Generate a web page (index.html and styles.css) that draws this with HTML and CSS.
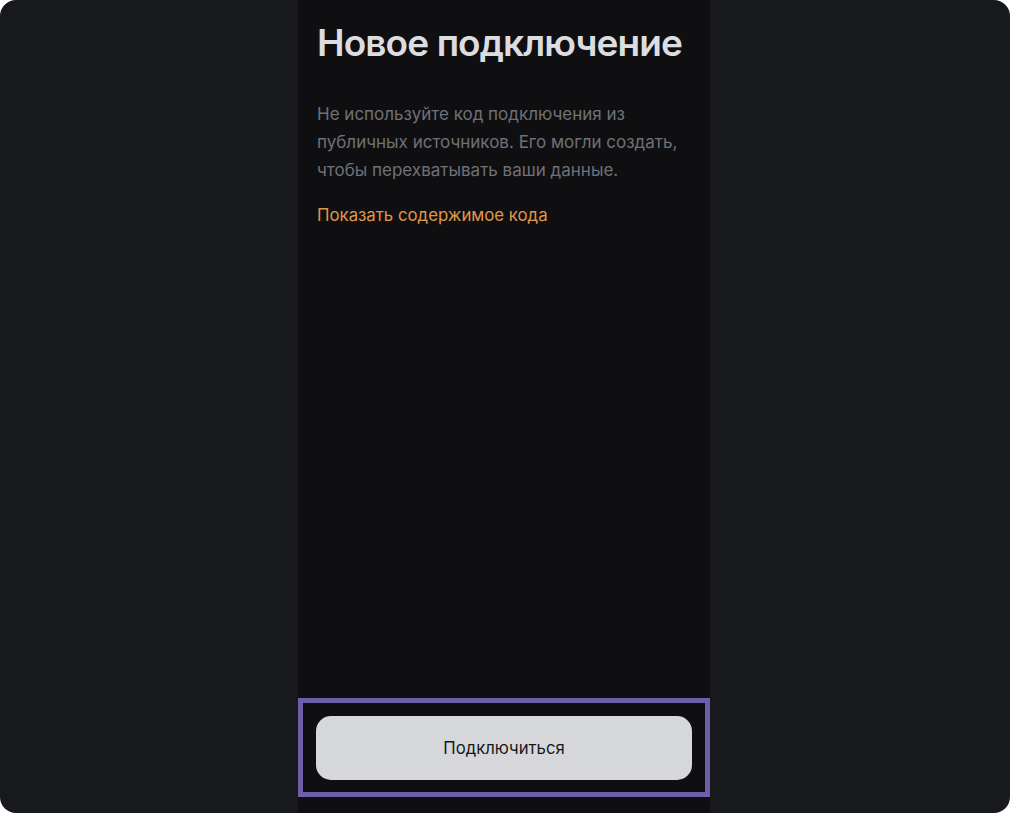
FILE: index.html
```html
<!DOCTYPE html>
<html lang="ru">
<head>
<meta charset="utf-8">
<link rel="stylesheet" href="styles.css">
</head>
<body>
<div class="frame">
  <main class="panel">
    <section class="content">
      <h1 class="title">Новое подключение</h1>
      <p class="warning">Не используйте код подключения из публичных источников. Его могли создать, чтобы перехватывать ваши данные.</p>
      <a class="link" href="#">Показать содержимое кода</a>
    </section>
    <footer class="footer">
      <button class="connect" type="button">Подключиться</button>
    </footer>
  </main>
</div>
</body>
</html>
```
FILE: styles.css
```css
html, body {
  margin: 0;
  padding: 0;
  background: #ffffff;
}
body {
  font-family: Inter, "Noto Sans", sans-serif;
}
.frame {
  width: 1010px;
  height: 813px;
  background: #18191d;
  border-radius: 16px;
  overflow: hidden;
  display: flex;
  justify-content: center;
}
.panel {
  width: 412px;
  margin-left: -2px;
  background: #0f0f11;
  display: flex;
  flex-direction: column;
}
.content {
  flex: 1;
  padding: 0 19px;
}
.title {
  margin: 19px 0 0;
  font-size: 37px;
  line-height: 48px;
  font-weight: 600;
  color: #dcdde1;
  letter-spacing: -0.9px;
}
.warning {
  margin: 33px 0 0;
  font-size: 17px;
  line-height: 28px;
  color: #707177;
}
.link {
  display: inline-block;
  margin-top: 17px;
  font-size: 16.8px;
  line-height: 28px;
  color: #e0964a;
  text-decoration: none;
}
.footer {
  margin-bottom: 16px;
  padding: 13px 13px 12px;
  border: 5px solid #6e5ea8;
}
.connect {
  display: block;
  width: 100%;
  height: 64px;
  border: none;
  border-radius: 15px;
  background: #d6d7db;
  color: #16171a;
  font-family: Inter, "Noto Sans", sans-serif;
  font-size: 16.7px;
}
```
